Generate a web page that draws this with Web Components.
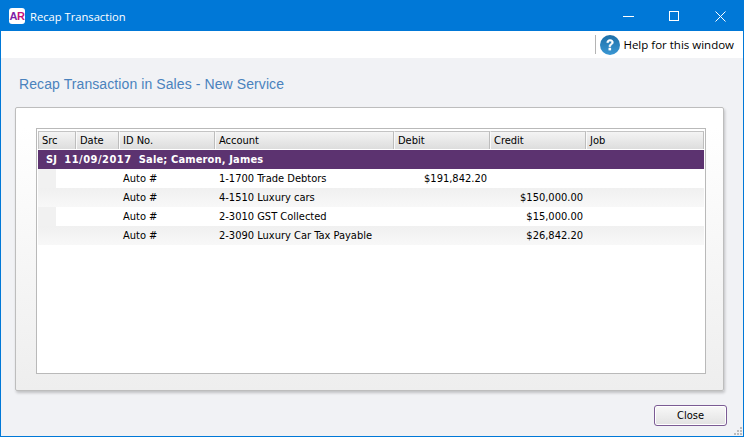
<!DOCTYPE html>
<html>
<head>
<meta charset="utf-8">
<title>Recap Transaction</title>
<style>
  html, body { margin: 0; height: 100%; overflow: hidden; }
  body { font: 11px "DejaVu Sans Condensed", "DejaVu Sans", sans-serif; }
</style>
</head>
<body>
<recap-window>
  <title-bar slot="title">Recap Transaction</title-bar>
  <help-bar slot="help">Help for this window</help-bar>
  <recap-grid></recap-grid>
</recap-window>

<script>
const UI_FONT = '"DejaVu Sans Condensed", "DejaVu Sans", sans-serif';

class TitleBar extends HTMLElement {
  constructor() {
    super();
    this.attachShadow({ mode: "open" });
    this.shadowRoot.innerHTML = `
      <style>
        :host { display: flex; align-items: center; height: 30px; background: #0078d7; color: #fff; }
        .logo {
          width: 16px; height: 16px; margin: 0 5px 0 8px; background: #fff; border-radius: 3px;
          font: bold 11px/16px "Liberation Sans", sans-serif; letter-spacing: -0.5px; text-align: center;
          color: #7a1fa8;
        }
        .logo b { color: #c4127e; }
        .name { flex: 1; font: 11.2px "Open Sans", sans-serif; }
        .btn { height: 30px; display: flex; align-items: center; justify-content: center; }
        .min { width: 47px; }
        .max { width: 45px; margin-right: 2px; }
        .close { width: 45px; margin-left: -1px; }
        svg { display: block; }
      </style>
      <div class="logo">A<b>R</b></div>
      <div class="name"><slot></slot></div>
      <div class="btn min"><svg width="11" height="11"><path d="M0 5.5H11" stroke="#fff" fill="none"/></svg></div>
      <div class="btn max"><svg width="11" height="11"><rect x=".5" y=".5" width="9" height="9" stroke="#fff" fill="none"/></svg></div>
      <div class="btn close"><svg width="11" height="11"><path d="M.5 .5L10.5 10.5M10.5 .5L.5 10.5" stroke="#fff" fill="none"/></svg></div>`;
  }
}

class HelpBar extends HTMLElement {
  constructor() {
    super();
    this.attachShadow({ mode: "open" });
    this.shadowRoot.innerHTML = `
      <style>
        :host {
          display: flex; align-items: center; justify-content: flex-end; height: 27px;
          background: #fff; padding-right: 9px; color: #000;
          font: 11.5px "Open Sans", sans-serif;
        }
        .sep { width: 1px; height: 19px; background: #b4b4b4; margin-right: 4px; }
        svg { display: block; margin-right: 3px; }
      </style>
      <div class="sep"></div>
      <svg width="20" height="20" viewBox="0 0 20 20">
        <defs><linearGradient id="q" x1="0" y1="0" x2="0" y2="1">
          <stop offset="0" stop-color="#1d6fa8"/><stop offset="1" stop-color="#3a97d3"/>
        </linearGradient></defs>
        <circle cx="10" cy="10" r="10" fill="url(#q)"/>
        <path d="M6.8 7.6C6.9 5.6 8.2 4.6 10.1 4.6C12 4.6 13.3 5.7 13.3 7.3C13.3 8.6 12.6 9.2 11.6 9.9C10.8 10.4 10.6 10.8 10.6 11.7H9C9 10.3 9.4 9.6 10.4 8.9C11.2 8.4 11.5 8 11.5 7.4C11.5 6.6 11 6.1 10.1 6.1C9.2 6.1 8.7 6.7 8.6 7.6Z" fill="#fff" stroke="#fff" stroke-width=".6"/>
        <rect x="8.5" y="12.8" width="2.6" height="2.6" fill="#fff"/>
      </svg>
      <slot></slot>`;
  }
}

class RecapWindow extends HTMLElement {
  constructor() {
    super();
    this.attachShadow({ mode: "open" });
    this.shadowRoot.innerHTML = `
      <style>
        :host {
          display: flex; flex-direction: column; box-sizing: border-box;
          width: 744px; height: 437px; border: 1px solid #0078d7;
          background: #f1f2f5; position: relative;
        }
        h1 {
          margin: 0; padding: 17px 0 0 18px; height: 32px;
          font: 14px/18px "Liberation Sans", sans-serif; letter-spacing: 0.09px; color: #4a82bd;
        }
        .panel {
          box-sizing: border-box; width: 709px; height: 284px; margin-left: 14px;
          padding: 20px 18px 16px 20px;
          border: 1px solid #bdbdbd; border-radius: 2px;
          background: linear-gradient(#fff, #fff 20px, #eeeeee);
          box-shadow: 1px 2px 3px rgba(0,0,0,.2);
        }
        .foot { display: flex; justify-content: flex-end; padding: 14px 16px 0 0; }
        .grip { position: absolute; right: 1px; bottom: 1px; }
      </style>
      <slot name="title"></slot>
      <slot name="help"></slot>
      <h1>Recap Transaction in Sales - New Service</h1>
      <div class="panel"><slot></slot></div>
      <div class="foot"><close-button>Close</close-button></div>
      <svg class="grip" width="8" height="8" fill="#bcbcbc">
        <rect x="6" y="0" width="2" height="2"/><rect x="3" y="3" width="2" height="2"/><rect x="6" y="3" width="2" height="2"/>
        <rect x="0" y="6" width="2" height="2"/><rect x="3" y="6" width="2" height="2"/><rect x="6" y="6" width="2" height="2"/>
      </svg>`;
  }
}

class CloseButton extends HTMLElement {
  constructor() {
    super();
    this.attachShadow({ mode: "open" });
    this.shadowRoot.innerHTML = `
      <style>
        :host {
          display: flex; align-items: center; justify-content: center; box-sizing: border-box;
          width: 73px; height: 21px; border: 1px solid #7b5b94; border-radius: 3px;
          background: linear-gradient(#f8f8f8, #e2e2e2);
          box-shadow: inset 0 0 0 1px #fff;
          font: 11px ${UI_FONT}; color: #000;
        }
      </style>
      <slot></slot>`;
  }
}

const COLUMNS = "38px 43px 96px 179px 96px 96px 118px";
const HEADERS = ["Src", "Date", "ID No.", "Account", "Debit", "Credit", "Job"];
const LINES = [
  ["Auto #", "1-1700 Trade Debtors", "$191,842.20", ""],
  ["Auto #", "4-1510 Luxury cars", "", "$150,000.00"],
  ["Auto #", "2-3010 GST Collected", "", "$15,000.00"],
  ["Auto #", "2-3090 Luxury Car Tax Payable", "", "$26,842.20"],
];

class RecapGrid extends HTMLElement {
  constructor() {
    super();
    this.attachShadow({ mode: "open" });
    const head = HEADERS.map((h) => `<div class="th">${h}</div>`).join("");
    const rows = LINES.map(
      (l, i) => `
      <div class="tr ${i % 2 ? "odd" : ""}">
        <div></div><div></div>
        <div class="td">${l[0]}</div>
        <div class="td">${l[1]}</div>
        <div class="td num">${l[2]}</div>
        <div class="td num">${l[3]}</div>
        <div></div>
      </div>`
    ).join("");
    this.shadowRoot.innerHTML = `
      <style>
        :host {
          display: block; box-sizing: border-box; width: 670px; height: 246px;
          border: 1px solid #b9b9b9; background: #fff; padding: 2px 0 0 1px;
          font: 11px ${UI_FONT}; color: #000;
        }
        .head, .tr { display: grid; grid-template-columns: ${COLUMNS}; width: 666px; }
        .head { height: 19px; }
        .th {
          box-sizing: border-box; height: 18px; padding-left: 3px; line-height: 17px;
          background: linear-gradient(#f4f4f4, #dddddd);
          border-top: 1px solid #c4c4c4; border-right: 1px solid #bdbdbd; border-left: 1px solid #fafafa;
        }
        .th:first-child { border-left-color: #c4c4c4; }
        .group {
          width: 666px; height: 19px; background: #5c3370; color: #fff;
          font-weight: bold; line-height: 19px; padding-left: 8px; box-sizing: border-box;
          white-space: pre; letter-spacing: 0.15px;
        }
        .group span { letter-spacing: 0.5px; }
        .tr { height: 19px; line-height: 19px; background: linear-gradient(90deg, #f1f1f1 18px, #fff 18px); }
        .tr.odd { background: linear-gradient(#f0f0f0, #f8f8f8); }
        .td { padding-left: 4px; white-space: nowrap; }
        .td.num { text-align: right; padding: 0 3px 0 0; }
      </style>
      <div class="head">${head}</div>
      <div class="group">SJ  <span>11/09/2017</span>  Sale; Cameron, James</div>
      ${rows}`;
  }
}

customElements.define("title-bar", TitleBar);
customElements.define("help-bar", HelpBar);
customElements.define("close-button", CloseButton);
customElements.define("recap-grid", RecapGrid);
customElements.define("recap-window", RecapWindow);
</script>
</body>
</html>
